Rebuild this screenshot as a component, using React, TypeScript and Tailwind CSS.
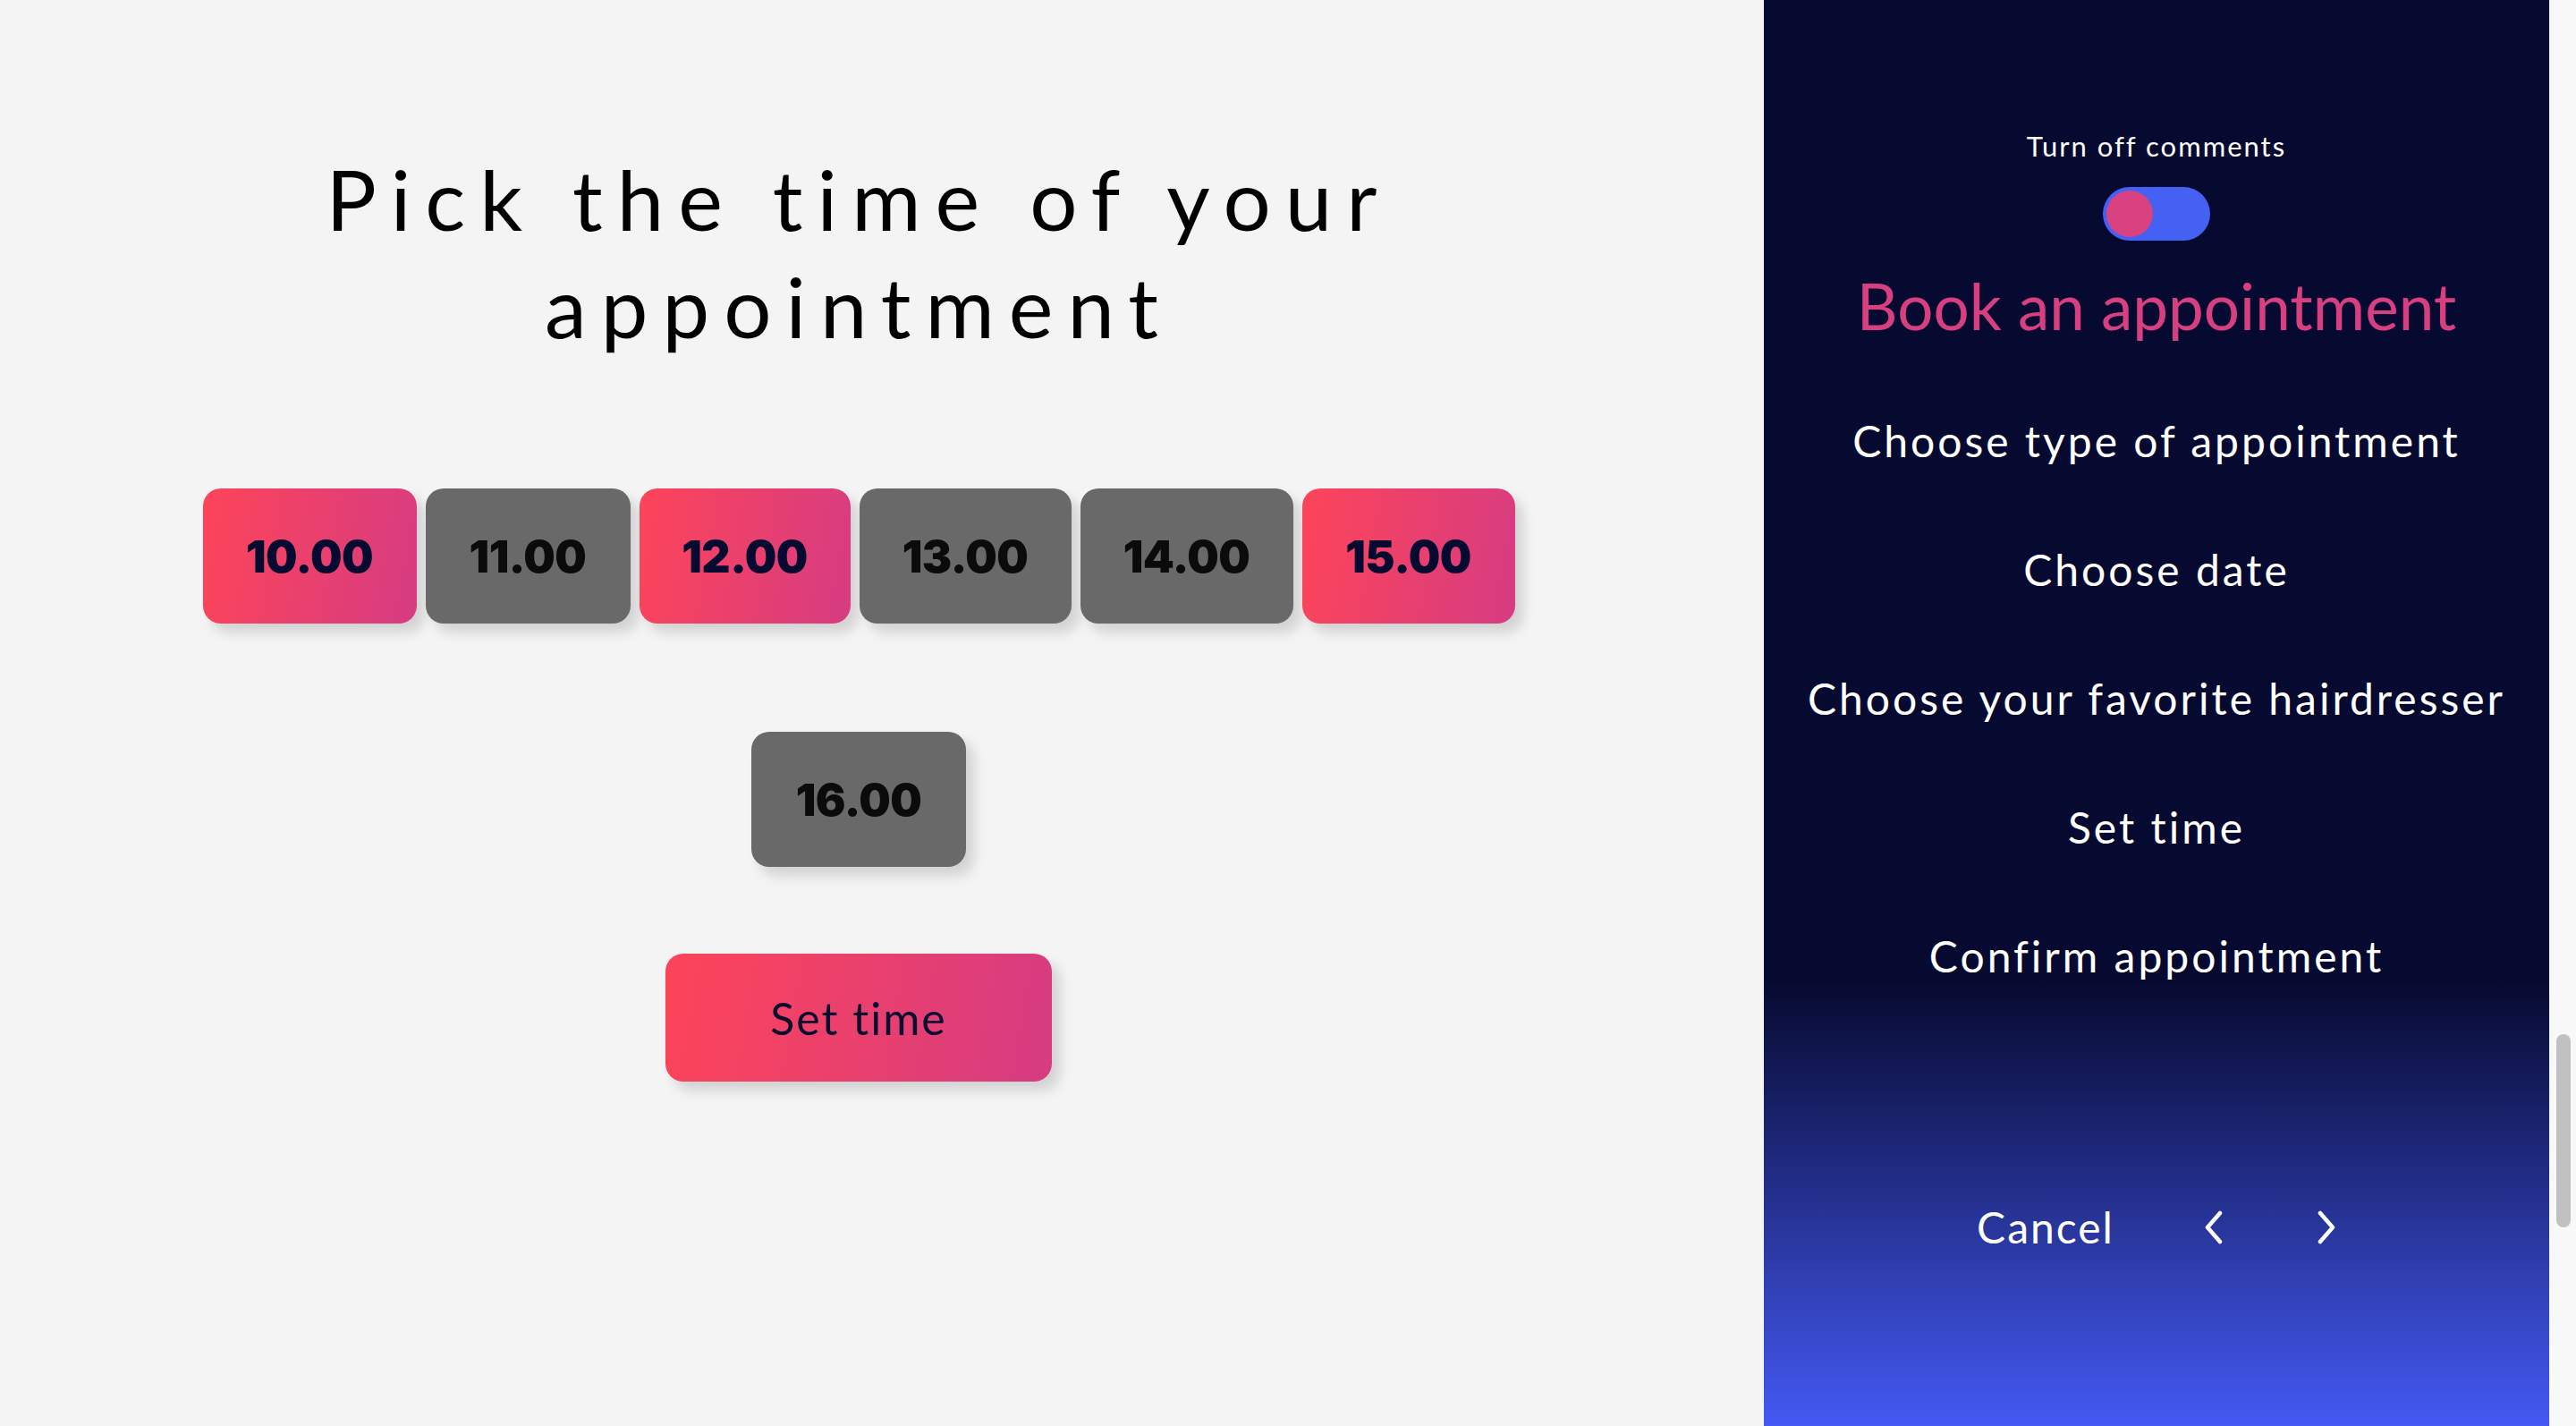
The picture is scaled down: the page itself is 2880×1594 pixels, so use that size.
import React from "react";

const times: { label: string; active: boolean; w: string }[] = [
  { label: "10.00", active: true, w: "w-[239px]" },
  { label: "11.00", active: false, w: "w-[229px]" },
  { label: "12.00", active: true, w: "w-[236px]" },
  { label: "13.00", active: false, w: "w-[237px]" },
  { label: "14.00", active: false, w: "w-[238px]" },
  { label: "15.00", active: true, w: "w-[238px]" },
  { label: "16.00", active: false, w: "w-[240px]" },
];

const steps = [
  "Choose type of appointment",
  "Choose date",
  "Choose your favorite hairdresser",
  "Set time",
  "Confirm appointment",
];

function Chevron({ dir }: { dir: "left" | "right" }) {
  return (
    <svg width="22" height="38" viewBox="0 0 22 38" fill="none">
      {dir === "left" ? (
        <path d="M18 3 L4 19 L18 35" stroke="white" strokeWidth="4.5" strokeLinecap="round" strokeLinejoin="round" />
      ) : (
        <path d="M4 3 L18 19 L4 35" stroke="white" strokeWidth="4.5" strokeLinecap="round" strokeLinejoin="round" />
      )}
    </svg>
  );
}

export default function App() {
  return (
    <div className="flex w-[2880px] h-[1594px] overflow-hidden font-['Lato',sans-serif]">
      {/* Left panel */}
      <div className="w-[1972px] h-full bg-[#f4f4f4] flex">
        <div className="w-[1920px] flex flex-col items-center">
          <h1 className="mt-[162px] text-center text-[94px] leading-[120px] tracking-[16px] font-normal text-black">
            <span className="block">Pick the time of your</span>
            <span className="block">appointment</span>
          </h1>

          <div className="mt-[144px] w-[1500px] flex flex-wrap justify-center gap-x-[10px] gap-y-[121px]">
            {times.map((t) => (
              <div
                key={t.label}
                className={
                  (t.active
                    ? "h-[151px] rounded-[20px] flex items-center justify-center bg-[linear-gradient(100deg,#fd4459,#d63c82)] shadow-[9px_10px_14px_rgba(0,0,0,0.14)] text-[#070a30] "
                    : "h-[151px] rounded-[20px] flex items-center justify-center bg-[#696969] shadow-[9px_10px_14px_rgba(0,0,0,0.14)] text-[#0b0b0b] ") +
                  t.w
                }
              >
                <span className="font-['Inter',sans-serif] font-black text-[50px] leading-none tracking-[-0.5px]">
                  {t.label}
                </span>
              </div>
            ))}
          </div>

          <div className="mt-[97px] w-[432px] h-[143px] rounded-[20px] flex items-center justify-center bg-[linear-gradient(100deg,#fd4459,#d63c82)] shadow-[9px_10px_14px_rgba(0,0,0,0.14)]">
            <span className="text-[50px] leading-none text-[#0a0c30] tracking-[2px]">Set time</span>
          </div>
        </div>
      </div>

      {/* Right panel */}
      <div className="w-[878px] h-full flex flex-col items-center text-white bg-[linear-gradient(to_bottom,#070a30_0%,#070a30_69%,#4459f3_100%)]">
        <div className="mt-[139px] text-[31px] leading-[48px] tracking-[2px]">Turn off comments</div>
        <div className="mt-[22px] w-[120px] h-[60px] rounded-full bg-[#4561f3] p-[4px] flex items-center">
          <div className="w-[52px] h-[52px] rounded-full bg-[#d84280]" />
        </div>
        <div className="mt-[30px] text-[71px] leading-[86px] text-[#d83f80] tracking-[0px]">Book an appointment</div>
        <div className="mt-[72px] flex flex-col items-center gap-[72px]">
          {steps.map((s) => (
            <div key={s} className="text-[48px] leading-[72px] tracking-[3px]">
              {s}
            </div>
          ))}
        </div>
        <div className="mt-[231px] flex items-center">
          <span className="text-[48px] leading-[72px] tracking-[2px]">Cancel</span>
          <div className="ml-[100px]">
            <Chevron dir="left" />
          </div>
          <div className="ml-[104px]">
            <Chevron dir="right" />
          </div>
        </div>
      </div>

      {/* Scrollbar */}
      <div className="w-[30px] h-full bg-[#f8f8f8] border-l border-[#ececec] flex flex-col items-center">
        <div className="mt-[1156px] w-[16px] h-[216px] rounded-full bg-[#c1c1c1]" />
      </div>
    </div>
  );
}
